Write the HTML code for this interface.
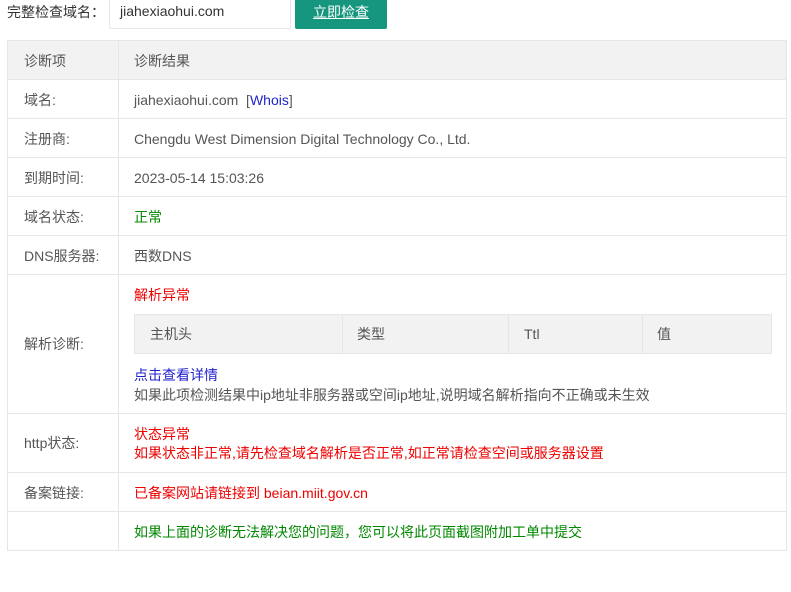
<!DOCTYPE html>
<html><head><meta charset="utf-8"><style>
*{margin:0;padding:0;box-sizing:border-box}
body{width:791px;height:592px;background:#fff;font-family:"Liberation Sans","Noto Sans CJK SC",sans-serif;font-size:14px;line-height:20px;color:#555;position:relative;overflow:hidden}
.a{position:absolute;white-space:nowrap}
.row{position:absolute;left:7px;width:780px;border:1px solid #e6e6e6;border-top:none}
.c1{position:absolute;left:16px;white-space:nowrap}
.c2{position:absolute;left:126px;white-space:nowrap}
.div{position:absolute;left:110px;top:0;bottom:0;border-left:1px solid #e6e6e6}
.red{color:#e00}.grn{color:#080}
</style></head><body>
<div class="a" style="left:7px;top:2px;font-size:14px;color:#333">完整检查域名：</div>
<div class="a" style="left:109px;top:-1px;width:182px;height:30px;border:1px solid #e6e6e6;border-top:none;border-radius:2px;padding:2px 0 0 10px;font-size:14px;color:#333">jiahexiaohui.com</div>
<div class="a" style="left:295px;top:-1px;width:92px;height:30px;background:#17967f;border-radius:2px;color:#fff;font-size:14px;text-align:center;line-height:26px;text-decoration:underline">立即检查</div>

<div class="row" style="top:40px;height:40px;border-top:1px solid #e6e6e6;background:#f2f2f2"><div class="div"></div><span class="c1" style="top:10px">诊断项</span><span class="c2" style="top:10px">诊断结果</span></div>
<div class="row" style="top:80px;height:39px"><div class="div"></div><span class="c1" style="top:10px">域名:</span><span class="c2" style="top:10px">jiahexiaohui.com &nbsp;[<span style="color:#22c">Whois</span>]</span></div>
<div class="row" style="top:119px;height:39px"><div class="div"></div><span class="c1" style="top:10px">注册商:</span><span class="c2" style="top:10px">Chengdu West Dimension Digital Technology Co., Ltd.</span></div>
<div class="row" style="top:158px;height:39px"><div class="div"></div><span class="c1" style="top:10px">到期时间:</span><span class="c2" style="top:10px">2023-05-14 15:03:26</span></div>
<div class="row" style="top:197px;height:39px"><div class="div"></div><span class="c1" style="top:10px">域名状态:</span><span class="c2 grn" style="top:10px">正常</span></div>
<div class="row" style="top:236px;height:39px"><div class="div"></div><span class="c1" style="top:10px">DNS服务器:</span><span class="c2" style="top:10px">西数DNS</span></div>
<div class="row" style="top:275px;height:139px"><div class="div"></div><span class="c1" style="top:59px">解析诊断:</span>
<span class="c2 red" style="top:10px">解析异常</span>
<div class="a" style="left:126px;top:39px;width:638px;height:40px;background:#f2f2f2;border:1px solid #e6e6e6">
<div class="a" style="left:207px;top:0;bottom:0;border-left:1px solid #e6e6e6"></div>
<div class="a" style="left:373px;top:0;bottom:0;border-left:1px solid #e6e6e6"></div>
<div class="a" style="left:507px;top:0;bottom:0;border-left:1px solid #e6e6e6"></div>
<span class="a" style="left:15px;top:9px">主机头</span><span class="a" style="left:222px;top:9px">类型</span><span class="a" style="left:389px;top:9px">Ttl</span><span class="a" style="left:522px;top:9px">值</span></div>
<span class="c2" style="top:90px;color:#22c">点击查看详情</span>
<span class="c2" style="top:110px">如果此项检测结果中ip地址非服务器或空间ip地址,说明域名解析指向不正确或未生效</span></div>
<div class="row" style="top:414px;height:59px"><div class="div"></div><span class="c1" style="top:19px">http状态:</span><span class="c2 red" style="top:10px">状态异常</span><span class="c2 red" style="top:29px">如果状态非正常,请先检查域名解析是否正常,如正常请检查空间或服务器设置</span></div>
<div class="row" style="top:473px;height:39px"><div class="div"></div><span class="c1" style="top:10px">备案链接:</span><span class="c2 red" style="top:10px">已备案网站请链接到 beian.miit.gov.cn</span></div>
<div class="row" style="top:512px;height:39px"><div class="div"></div><span class="c2 grn" style="top:10px">如果上面的诊断无法解决您的问题，您可以将此页面截图附加工单中提交</span></div>
</body></html>
